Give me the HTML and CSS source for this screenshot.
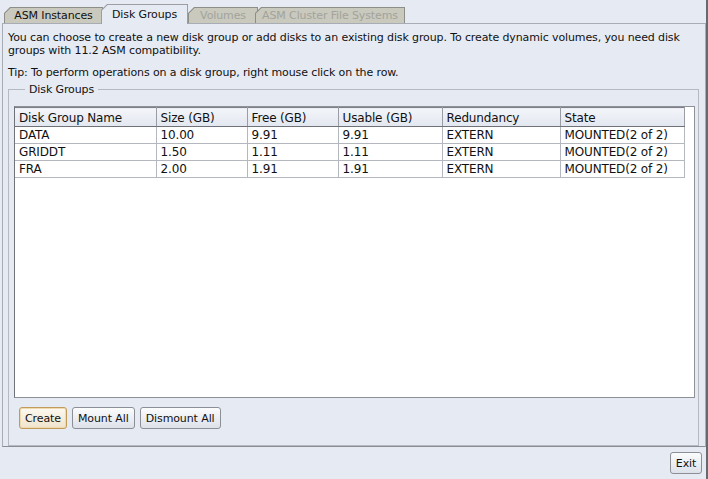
FILE: index.html
```html
<!DOCTYPE html>
<html>
<head>
<meta charset="utf-8">
<link rel="stylesheet" href="styles.css">
</head>
<body>
<div class="window">
  <div class="tabs">
    <div class="tab tab-asm"><div class="tab-in">ASM Instances</div></div>
    <div class="tab tab-dg selected"><div class="tab-in">Disk Groups</div></div>
    <div class="tab tab-vol disabled"><div class="tab-in">Volumes</div></div>
    <div class="tab tab-acfs disabled"><div class="tab-in">ASM Cluster File Systems</div></div>
  </div>
  <div class="panel">
    <p class="intro">You can choose to create a new disk group or add disks to an existing disk group. To create dynamic volumes, you need disk groups with 11.2 ASM compatibility.</p>
    <p class="tip">Tip: To perform operations on a disk group, right mouse click on the row.</p>
    <fieldset class="group">
      <legend>Disk Groups</legend>
      <div class="pane">
        <table class="grid">
          <colgroup>
            <col class="c1"><col class="c2"><col class="c3"><col class="c4"><col class="c5"><col class="c6">
          </colgroup>
          <thead>
            <tr><th>Disk Group Name</th><th>Size (GB)</th><th>Free (GB)</th><th>Usable (GB)</th><th>Redundancy</th><th>State</th></tr>
          </thead>
          <tbody>
            <tr><td>DATA</td><td>10.00</td><td>9.91</td><td>9.91</td><td>EXTERN</td><td>MOUNTED(2 of 2)</td></tr>
            <tr><td>GRIDDT</td><td>1.50</td><td>1.11</td><td>1.11</td><td>EXTERN</td><td>MOUNTED(2 of 2)</td></tr>
            <tr><td>FRA</td><td>2.00</td><td>1.91</td><td>1.91</td><td>EXTERN</td><td>MOUNTED(2 of 2)</td></tr>
          </tbody>
        </table>
      </div>
      <div class="actions">
        <button class="btn default">Create</button>
        <button class="btn">Mount All</button>
        <button class="btn">Dismount All</button>
      </div>
    </fieldset>
  </div>
  <div class="footer">
    <button class="btn exit">Exit</button>
  </div>
</div>
</body>
</html>
```
FILE: styles.css
```css
html, body {
  margin: 0;
  padding: 0;
}
body {
  background: #e6eaf3;
  font-family: "DejaVu Sans", "Liberation Sans", sans-serif;
  font-size: 11px;
  letter-spacing: -0.12px;
  color: #111;
}
.window {
  width: 706px;
  height: 479px;
  border-right: 2px solid #666a70;
  display: flex;
  flex-direction: column;
}
.tabs {
  height: 23px;
  display: flex;
  align-items: flex-end;
  padding-left: 4px;
  flex: none;
}
.tab {
  height: 16px;
  background: #8e8e88;
  padding: 1px 1px 0 1px;
  box-sizing: border-box;
  clip-path: polygon(6px 0, 100% 0, 100% 100%, 0 100%, 0 6px);
}
.tab-in {
  height: 100%;
  background: #c9c9bd;
  clip-path: polygon(5.6px 0, 100% 0, 100% 100%, 0 100%, 0 5.6px);
  text-align: center;
  line-height: 15px;
  box-sizing: border-box;
  white-space: nowrap;
  color: #111;
}
.tab-asm { width: 99px; }
.tab-dg { width: 87px; margin-left: -2px; }
.tab-vol { width: 70px; }
.tab-acfs { width: 150px; margin-left: -3px; }
.tab.selected {
  height: 20px;
  margin-bottom: -1px;
  background: #9c9ea4;
  position: relative;
  z-index: 2;
}
.tab.selected .tab-in {
  background: #e6eaf3;
  line-height: 19px;
  padding-bottom: 1px;
}
.tab.disabled .tab-in {
  color: #a3a39c;
}
.panel {
  flex: none;
  height: 424px;
  box-sizing: border-box;
  margin-left: 2px;
  border: 1px solid #a8acb4;
  border-bottom-color: #8a8d93;
  padding: 7px 6px 0 5px;
  display: flex;
  flex-direction: column;
}
.intro, .tip {
  margin: 0;
  line-height: 13px;
}
.tip {
  margin-top: 9px;
}
.group {
  margin: 4px 0 0 0;
  padding: 10px 3px 8px 5px;
  border: 1px solid #b6b9bf;
  flex: 1;
  display: flex;
  flex-direction: column;
  min-height: 0;
}
.group legend {
  margin-left: 11px;
  padding: 0 4px;
  line-height: 13px;
}
.pane {
  height: 292px;
  box-sizing: border-box;
  border: 1px solid #8e9198;
  border-left-color: #70737a;
  background: #fff;
  flex: none;
}
.grid {
  border-collapse: collapse;
  table-layout: fixed;
  width: 669px;
  font-size: 12px;
  letter-spacing: -0.15px;
}
.c1 { width: 141px; }
.c2 { width: 91px; }
.c3 { width: 91px; }
.c4 { width: 104px; }
.c5 { width: 118px; }
.c6 { width: 124px; }
.grid th {
  height: 19px;
  box-sizing: border-box;
  font-weight: normal;
  text-align: left;
  padding: 1px 4px 0 4px;
  background: linear-gradient(#f3f5f9, #e2e6ef);
  border: 1px solid #9a9da4;
  border-top-color: #7d8087;
  border-bottom-color: #6f7279;
  white-space: nowrap;
}
.grid th:first-child {
  border-left: none;
}
.grid td {
  height: 15px;
  padding: 1px 4px 0 4px;
  border: 1px solid #b4b7bd;
  border-top: none;
  line-height: 15px;
  white-space: nowrap;
  overflow: hidden;
}
.grid td:first-child {
  border-left: none;
}
.actions {
  display: flex;
  gap: 5px;
  margin-top: 9px;
  padding-left: 5px;
}
.btn {
  font-family: "DejaVu Sans", "Liberation Sans", sans-serif;
  font-size: 11px;
  letter-spacing: -0.1px;
  color: #111;
  height: 22px;
  padding: 0 5px;
  margin: 0;
  border: 1px solid #8c8f95;
  border-radius: 3px;
  background: linear-gradient(#fbfcfd, #dde1e9);
}
.btn.default {
  border-color: #c29a5a;
  box-shadow: inset 0 0 0 1px #efd9ae;
  background: linear-gradient(#fdf9f0, #efe4cc);
}
.footer {
  flex: 1;
  display: flex;
  justify-content: flex-end;
  align-items: flex-start;
  padding: 5px 4px 0 0;
}
.btn.exit {
  width: 32px;
  padding: 0;
}
```
